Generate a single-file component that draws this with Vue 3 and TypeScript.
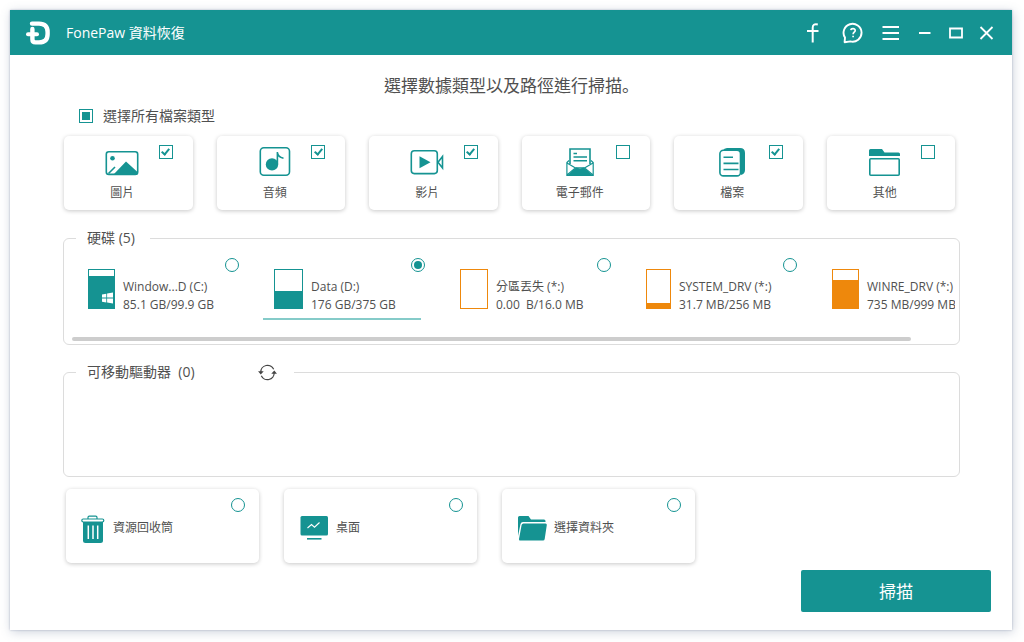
<script setup lang="ts">
import { computed, ref } from 'vue'

interface FileType {
  id: string
  label: string
  checked: boolean
}

interface Drive {
  id: string
  name: string
  usage: string
  fill: number
  width: number
  lost: boolean
  system: boolean
}

const fileTypes = ref<FileType[]>([
  { id: 'image', label: '圖片', checked: true },
  { id: 'audio', label: '音頻', checked: true },
  { id: 'video', label: '影片', checked: true },
  { id: 'mail', label: '電子郵件', checked: false },
  { id: 'file', label: '檔案', checked: true },
  { id: 'other', label: '其他', checked: false },
])

const drives: Drive[] = [
  { id: 'c', name: 'Window...D (C:)', usage: '85.1 GB/99.9 GB', fill: 85, width: 27, lost: false, system: true },
  { id: 'd', name: 'Data (D:)', usage: '176 GB/375 GB', fill: 46, width: 29, lost: false, system: false },
  { id: 'lost', name: '分區丟失 (*:)', usage: '0.00  B/16.0 MB', fill: 0, width: 28, lost: true, system: false },
  { id: 'sys', name: 'SYSTEM_DRV (*:)', usage: '31.7 MB/256 MB', fill: 12, width: 25, lost: true, system: false },
  { id: 'winre', name: 'WINRE_DRV (*:)', usage: '735 MB/999 MB', fill: 74, width: 27, lost: true, system: false },
]

const places = [
  { id: 'bin', label: '資源回收筒' },
  { id: 'desktop', label: '桌面' },
  { id: 'folder', label: '選擇資料夾' },
]

const location = ref('d')

const allChecked = computed(() => fileTypes.value.every((t) => t.checked))
const someChecked = computed(() => !allChecked.value && fileTypes.value.some((t) => t.checked))

function toggleAll(event: Event) {
  const value = (event.target as HTMLInputElement).checked
  fileTypes.value.forEach((t) => (t.checked = value))
}
</script>

<template>
  <div class="window">
    <header class="titlebar">
      <svg class="logo" viewBox="0 0 26 26" aria-hidden="true">
        <path d="M7 3.6H14Q22.6 3.6 22.6 12V14Q22.6 22.4 14 22.4H10.5Q7.4 22.4 7.4 19.2V9" fill="none" stroke="#fff" stroke-width="4.4" stroke-linecap="round" stroke-linejoin="round" />
        <path d="M3 14.2H12" stroke="#fff" stroke-width="4" stroke-linecap="round" />
      </svg>
      <h1 class="app-name">FonePaw 資料恢復</h1>
      <nav class="actions" aria-label="視窗">
        <button class="action wide" type="button" aria-label="Facebook">
          <svg viewBox="0 0 22 22"><path d="M15.8 2.4C12.2 1.6 10.7 3 10.7 5.7V20.5M5 9H16.5" stroke-width="2" /></svg>
        </button>
        <button class="action wide" type="button" aria-label="說明">
          <svg viewBox="0 0 22 22">
            <path d="M2.6 20.2L3 15.6A9 8.9 0 1 1 8.4 19.4Z" stroke-width="1.9" stroke-linejoin="round" />
            <path d="M8.8 8.2C9 6 13.3 6 13.2 8.5C13.1 10.2 11.1 10.2 11.1 12.2M11.1 13.7V15.2" stroke-width="1.7" />
          </svg>
        </button>
        <button class="action menu" type="button" aria-label="選單">
          <svg viewBox="0 0 22 22"><path d="M2.5 5H19M2.5 11H19M2.5 17H19" stroke-width="2" /></svg>
        </button>
        <button class="action" type="button" aria-label="最小化">
          <svg viewBox="0 0 22 22"><path d="M5 11H16.5" stroke-width="2" /></svg>
        </button>
        <button class="action" type="button" aria-label="最大化">
          <svg viewBox="0 0 22 22"><path d="M5 6.5H17V15.5H5Z" stroke-width="1.8" /></svg>
        </button>
        <button class="action" type="button" aria-label="關閉">
          <svg viewBox="0 0 22 22"><path d="M4.5 5L16.5 17M16.5 5L4.5 17" stroke-width="1.8" /></svg>
        </button>
      </nav>
    </header>

    <main class="content">
      <h2 class="heading">選擇數據類型以及路徑進行掃描<span class="stop">。</span></h2>

      <label class="select-all">
        <input class="check" type="checkbox" :checked="allChecked" :indeterminate="someChecked" @change="toggleAll" />
        選擇所有檔案類型
      </label>

      <div class="types">
        <label v-for="type in fileTypes" :key="type.id" class="card type">
          <input v-model="type.checked" class="check corner" type="checkbox" />
          <svg class="type-icon" viewBox="0 0 36 32" aria-hidden="true">
            <template v-if="type.id === 'image'">
              <rect class="line" x="2.3" y="5.8" width="31.4" height="22.6" rx="2.5" />
              <circle class="solid" cx="8.5" cy="12.3" r="2.3" />
              <path class="solid" d="M10 28L22 15.5L33.5 26V28.5H9.5Z" />
              <path class="line" d="M4.5 27.5L11 21" />
            </template>
            <template v-else-if="type.id === 'audio'">
              <rect class="line" x="3.3" y="1.8" width="29.2" height="27.4" rx="3.5" />
              <circle class="solid" cx="15" cy="18.4" r="6.2" />
              <path class="line" d="M20.4 18V6C20.6 10 23.5 11.6 26.5 12.2" />
            </template>
            <template v-else-if="type.id === 'video'">
              <rect class="line" x="2.3" y="4.8" width="26" height="22.8" rx="3" />
              <path class="solid" d="M10.5 10.3L21.5 16.3L10.5 22.3Z" />
              <path class="line" d="M33.5 10.5L29 16.3L33.5 22Z" />
            </template>
            <template v-else-if="type.id === 'mail'">
              <path class="line" d="M8 18V3H28V18" />
              <path class="line" d="M11.5 7.5H15M11.5 11H25M11.5 14.7H25" />
              <path class="line thin" d="M7 14.5L4.9 16.5V29.3H31.2V16.5L29 14.5M5 17L13.5 22M31 17L22.5 22M5 29L13.5 21.8H22.5L31 29" />
              <path class="solid" d="M5 29.8L14 21.5L18 22.5L22 21.5L31 29.8Z" />
            </template>
            <template v-else-if="type.id === 'file'">
              <path class="solid" d="M9 4.5Q10 2 13 2H26Q31 2 31 7V24Q31 28 27 29L25 8L22 4.5Z" />
              <rect class="paper" x="5.9" y="4.3" width="20.6" height="25.6" rx="3.5" />
              <path class="line" d="M9.5 11.2H19M9.5 17.4H24.5M9.5 23.5H24.5" />
            </template>
            <template v-else>
              <path class="solid" d="M2 10V4.5Q2 3 3.5 3H15L17.5 6.5H31.5Q33 6.5 33 8V10Z" />
              <rect class="line" x="2.8" y="12.8" width="29.4" height="16.4" rx="1" />
            </template>
          </svg>
          <span class="type-label">{{ type.label }}</span>
        </label>
      </div>

      <fieldset class="group">
        <legend class="legend">硬碟 (5)</legend>
        <div class="drives">
          <label
            v-for="drive in drives"
            :key="drive.id"
            class="drive"
            :class="{ selected: location === drive.id, lost: drive.lost }"
          >
            <input v-model="location" class="radio drive-radio" type="radio" name="location" :value="drive.id" />
            <span class="disk" :style="{ width: drive.width + 'px' }">
              <span class="disk-fill" :style="{ height: drive.fill + '%' }">
                <svg v-if="drive.system" class="win-logo" viewBox="0 0 11 12" aria-hidden="true">
                  <path d="M0 2.4L4.3 1.7V5.6H0ZM5.1 1.5L11 .5V5.6H5.1ZM0 6.5H4.3V10.4L0 9.7ZM5.1 6.5H11V11.5L5.1 10.6Z" fill="#fff" />
                </svg>
              </span>
            </span>
            <span class="drive-text">
              <span>{{ drive.name }}</span>
              <span>{{ drive.usage }}</span>
            </span>
          </label>
        </div>
        <div class="scroll-thumb"></div>
      </fieldset>

      <fieldset class="group removable">
        <legend class="legend with-action">
          可移動驅動器&nbsp; (0)
          <button class="refresh" type="button" aria-label="重新整理">
            <svg viewBox="0 0 20 18">
              <path d="M3 8.4A7 6.6 0 0 1 16.5 5.6M17 9.6A7 6.6 0 0 1 3.5 12.4" fill="none" stroke="#444" stroke-width="1.3" />
              <path d="M14 10.4L17.2 7L20 10.4ZM0 7.6H6L2.9 11Z" fill="#444" />
            </svg>
          </button>
        </legend>
      </fieldset>

      <div class="places">
        <label v-for="place in places" :key="place.id" class="card place">
          <input v-model="location" class="radio corner" type="radio" name="location" :value="place.id" />
          <svg v-if="place.id === 'bin'" class="place-icon narrow" viewBox="2 0 25 30" aria-hidden="true">
            <path class="line thin" d="M9 4V2.5Q9 1.2 10.3 1.2H16.7Q18 1.2 18 2.5V4" />
            <rect class="line thin" x="2.8" y="4" width="22" height="3" rx="1.4" />
            <path class="solid" d="M4 7H24V25.5Q24 28 21.5 28H6.5Q4 28 4 25.5Z" />
            <path d="M9.3 10.5V24M14 10.5V24M18.7 10.5V24" stroke="#fff" stroke-width="1.5" />
          </svg>
          <svg v-else class="place-icon" viewBox="0 0 30 30" aria-hidden="true">
            <template v-if="place.id === 'desktop'">
              <rect class="solid" x="1.5" y="1" width="27.5" height="19.5" rx="1.5" />
              <path d="M8.5 13L12.5 9.5L15.5 12.2L20.5 7.5" fill="none" stroke="#fff" stroke-width="1.1" />
              <path class="line" d="M8 23.8H22.5" />
            </template>
            <template v-else>
              <path class="solid" d="M1 21V2.5Q1 1 2.5 1H11.5L14 4.5H27Q28.5 4.5 28.5 6V7H6Q4 7 3.5 9Z" />
              <path class="solid" d="M6.5 8.5H28.5Q30 8.5 29.8 10L27.7 24Q27.4 25.5 26 25.5H3Q1.7 25.5 2 24L4.6 10Q5 8.5 6.5 8.5Z" />
            </template>
          </svg>
          <span>{{ place.label }}</span>
        </label>
      </div>
    </main>

    <footer class="footer">
      <button class="scan" type="button">掃描</button>
    </footer>
  </div>
</template>

<style>
body {
  background: #fff;
}
</style>

<style scoped>
.window {
  --teal: #159392;
  --orange: #ee880c;
  box-sizing: border-box;
  min-height: calc(100vh - 22px);
  margin: 10px 12px 12px 10px;
  background: #fff;
  box-shadow: 0 0 2px rgba(90, 105, 140, 0.4), 1px 2px 10px rgba(90, 105, 140, 0.3);
  color: #505050;
  font-family: "Open Sans", "Noto Sans CJK TC", sans-serif;
  font-size: 14px;
  line-height: 20px;
  display: flow-root;
}

.titlebar {
  display: flex;
  align-items: center;
  height: 45px;
  padding: 0 10px 0 15px;
  background: var(--teal);
  color: #fff;
}

.logo {
  width: 26px;
  height: 26px;
}

.app-name {
  margin: 0 auto 0 15px;
  font-size: 14px;
  font-weight: 400;
}

.actions {
  display: flex;
}

.action {
  display: flex;
  justify-content: center;
  width: 31px;
  padding: 0;
  border: 0;
  background: none;
}

.action.wide {
  width: 40px;
}

.action.menu {
  width: 36px;
}

.action svg {
  width: 22px;
  height: 22px;
  fill: none;
  stroke: #fff;
}

.content {
  padding: 19px 52px 0 53px;
}

.heading {
  margin: 0;
  font-size: 17px;
  font-weight: 400;
  line-height: 24px;
  text-align: center;
}

.stop {
  font-family: "Noto Sans CJK JP", sans-serif;
  line-height: 20px;
}

.select-all {
  display: flex;
  align-items: center;
  gap: 10px;
  margin: 8px 0 10px 16px;
}

.check,
.radio {
  appearance: none;
  box-sizing: border-box;
  display: grid;
  place-content: center;
  flex: none;
  width: 14px;
  height: 14px;
  margin: 0;
  border: 1px solid var(--teal);
  background: #fff;
}

.check:checked::after {
  content: "";
  width: 3px;
  height: 6px;
  border: solid var(--teal);
  border-width: 0 2px 2px 0;
  transform: translateY(-1px) rotate(40deg);
}

.check:indeterminate::after {
  content: "";
  width: 8px;
  height: 8px;
  background: var(--teal);
}

.radio {
  border-radius: 50%;
}

.radio:checked::after {
  content: "";
  width: 8px;
  height: 8px;
  border-radius: 50%;
  background: var(--teal);
}

.card {
  position: relative;
  box-sizing: border-box;
  height: 74px;
  border-radius: 5px;
  background: #fff;
  box-shadow: 0 1px 4px rgba(0, 0, 0, 0.22);
  font-size: 12px;
}

.corner {
  position: absolute;
  top: 9px;
  right: 20px;
}

.types {
  display: grid;
  grid-template-columns: repeat(6, 1fr);
  gap: 24px;
  margin: 0 5px 0 1px;
}

.type {
  display: flex;
  flex-direction: column;
  align-items: center;
  padding: 10px 12px 8px 0;
}

.type-icon {
  width: 36px;
  height: 32px;
}

.type-label {
  margin-top: 6px;
  line-height: 18px;
}

.line {
  fill: none;
  stroke: var(--teal);
  stroke-width: 1.6;
}

.line.thin {
  stroke-width: 1.2;
}

.solid {
  fill: var(--teal);
}

.paper {
  fill: #fff;
  stroke: var(--teal);
  stroke-width: 1.6;
}

.group {
  min-width: 0;
  margin: 18px 0 0;
  padding: 10px 4px 3px 8px;
  border: 1px solid #dcdcdc;
  border-radius: 6px;
}

.legend {
  margin-left: 4px;
  padding: 0 15px 0 11px;
}

.drives {
  display: flex;
  gap: 28px;
  padding-left: 5px;
  overflow-x: auto;
  scrollbar-width: none;
}

.drive {
  position: relative;
  box-sizing: border-box;
  display: flex;
  flex: 0 0 158px;
  gap: 8px;
  height: 62px;
  padding: 11px 0 0 11px;
  border-bottom: 2px solid transparent;
  font-size: 12px;
  line-height: 18px;
  white-space: pre;
}

.drive.selected {
  border-color: #85cbc9;
}

.drive-radio {
  position: absolute;
  top: 0;
  right: -4px;
}

.disk {
  box-sizing: border-box;
  display: flex;
  flex: none;
  align-items: flex-end;
  height: 40px;
  border: 1px solid var(--teal);
}

.disk-fill {
  display: flex;
  flex: 1;
  align-items: flex-end;
  justify-content: flex-end;
  background: var(--teal);
}

.lost .disk {
  border-color: var(--orange);
}

.lost .disk-fill {
  background: var(--orange);
}

.win-logo {
  width: 11px;
  height: 12px;
  margin: 0 1px 4px 0;
}

.drive-text {
  display: flex;
  flex-direction: column;
  padding-top: 9px;
}

.scroll-thumb {
  width: 95%;
  height: 4px;
  margin-top: 17px;
  border-radius: 2px;
  background: #cdcdcd;
}

.removable {
  box-sizing: border-box;
  min-height: 115px;
  margin-top: 17px;
}

.with-action {
  display: flex;
  align-items: center;
  gap: 63px;
  padding-right: 17px;
}

.refresh {
  display: flex;
  padding: 0;
  border: 0;
  background: none;
}

.refresh svg {
  width: 19px;
  height: 17px;
}

.places {
  display: grid;
  grid-template-columns: repeat(3, minmax(0, 193px));
  gap: 25px;
  margin: 12px 0 0 3px;
}

.place {
  display: flex;
  align-items: center;
  gap: 7px;
  padding: 4px 0 0 15px;
}

.place .corner {
  right: 14px;
}

.place-icon {
  width: 30px;
  height: 30px;
  margin-top: 4px;
}

.place-icon.narrow {
  width: 25px;
}

.footer {
  display: flex;
  justify-content: flex-end;
  padding: 7px 21px 18px;
}

.scan {
  width: 190px;
  height: 42px;
  padding: 0 0 2px;
  border: 0;
  border-radius: 2px;
  background: var(--teal);
  color: #fff;
  font-family: inherit;
  font-size: 17px;
}
</style>
